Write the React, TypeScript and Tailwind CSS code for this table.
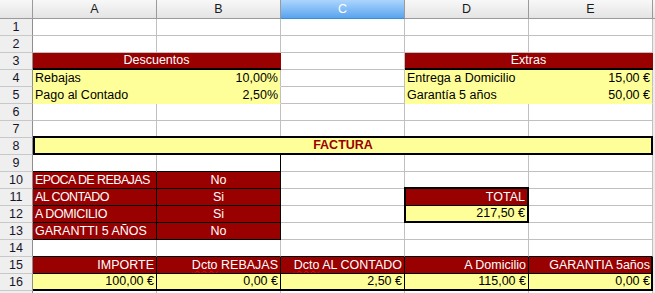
import React from 'react';

type CellProps = { className?: string; children?: React.ReactNode };

// One spreadsheet cell; every cell draws its own right and bottom grid line.
function C({ className = '', children }: CellProps) {
  return <div className={'overflow-hidden whitespace-nowrap ' + className}>{children}</div>;
}

const GRID = 'border-r border-b border-[#c0c0c0] bg-white';
const RED = 'bg-[#990000] text-white';
const YEL = 'bg-[#ffff99] text-black';
const HEAD = 'bg-linear-to-b from-[#f8f8f8] to-[#e4e4e4] border-r border-b border-[#9a9a9a] text-center text-[#1a1a1a] leading-[18px]';

function RowHead({ n }: { n?: number }) {
  return (
    <C className="bg-[#efefef] border-r border-r-[#8e8e8e] border-b border-b-[#c8c8c8] text-center text-[#15152a]">
      {n}
    </C>
  );
}

function Filler() {
  return <div className="bg-[#ececec]" />;
}

function EmptyRow({ n }: { n?: number }) {
  return (
    <>
      <RowHead n={n} />
      <C className={GRID} />
      <C className={GRID} />
      <C className={GRID} />
      <C className={GRID} />
      <C className={GRID} />
      <Filler />
    </>
  );
}

// Header word flagged by the spell checker (red wavy underline).
function Dcto({ rest }: { rest: string }) {
  return (
    <>
      <span className="underline decoration-wavy decoration-[#ff0000] decoration-1 underline-offset-[1px]">Dcto</span>
      {' ' + rest}
    </>
  );
}

export default function App() {
  return (
    <div className="w-[655px] h-[293px] overflow-hidden bg-white font-['Liberation_Sans',Arial,sans-serif] text-[12.5px] leading-[16px]">
      <div className="grid grid-cols-[33px_repeat(5,124px)_2px] grid-rows-[19px_repeat(17,17px)]">
        {/* column headers */}
        <C className="bg-linear-to-b from-[#f8f8f8] to-[#e4e4e4] border-r border-b border-[#9a9a9a]" />
        <C className={HEAD}>A</C>
        <C className={HEAD}>B</C>
        <C className="bg-linear-to-b from-[#acd5fc] to-[#58a4ee] border-r border-r-[#9a9a9a] border-b border-b-[#3d8bdb] text-center text-white leading-[18px]">
          C
        </C>
        <C className={HEAD}>D</C>
        <C className={HEAD}>E</C>
        <div className="bg-linear-to-b from-[#f8f8f8] to-[#e4e4e4] border-b border-[#9a9a9a]" />

        <EmptyRow n={1} />
        <EmptyRow n={2} />

        {/* row 3: section titles */}
        <RowHead n={3} />
        <C className={RED + ' col-span-2 text-center border-r border-r-[#990000] border-b-2 border-b-black leading-[15px]'}>
          Descuentos
        </C>
        <C className={GRID} />
        <C className={RED + ' col-span-2 text-center border-r border-r-[#990000] border-b-2 border-b-black leading-[15px]'}>
          Extras
        </C>
        <Filler />

        {/* row 4 */}
        <RowHead n={4} />
        <C className={YEL + ' pl-[2px] border-r border-b border-[#ffff99]'}>Rebajas</C>
        <C className={YEL + ' text-right pr-[2px] border-r border-r-[#c0c0c0] border-b border-b-[#ffff99]'}>10,00%</C>
        <C className={GRID} />
        <C className={YEL + ' pl-[2px] border-r border-b border-[#ffff99]'}>Entrega a Domicilio</C>
        <C className={YEL + ' text-right pr-[2px] border-r border-r-[#c0c0c0] border-b border-b-[#ffff99]'}>15,00 €</C>
        <Filler />

        {/* row 5 */}
        <RowHead n={5} />
        <C className={YEL + ' pl-[2px] border-r border-b border-[#ffff99]'}>Pago al Contado</C>
        <C className={YEL + ' text-right pr-[2px] border-r border-r-[#c0c0c0] border-b border-b-[#ffff99]'}>2,50%</C>
        <C className={GRID} />
        <C className={YEL + ' pl-[2px] border-r border-b border-[#ffff99]'}>Garantía 5 años</C>
        <C className={YEL + ' text-right pr-[2px] border-r border-r-[#c0c0c0] border-b border-b-[#ffff99]'}>50,00 €</C>
        <Filler />

        <EmptyRow n={6} />
        <EmptyRow n={7} />

        {/* row 8: invoice banner */}
        <RowHead n={8} />
        <C className="bg-[#ffff99] text-[#990000] col-span-5 -mt-[2px] border-2 border-black text-center font-bold leading-[15px]">
          FACTURA
        </C>
        <Filler />

        {/* row 9 */}
        <RowHead n={9} />
        <C className="bg-white border-r border-r-[#c0c0c0] border-b border-b-black" />
        <C className="bg-white border-r border-r-black border-b border-b-black" />
        <C className={GRID} />
        <C className={GRID} />
        <C className={GRID} />
        <Filler />

        {/* rows 10-13: options */}
        <RowHead n={10} />
        <C className={RED + ' pl-[2px] tracking-[-0.6px] border-r border-b border-black'}>EPOCA DE REBAJAS</C>
        <C className={RED + ' text-center border-r border-b border-black'}>No</C>
        <C className={GRID} />
        <C className={GRID} />
        <C className={GRID} />
        <Filler />

        <RowHead n={11} />
        <C className={RED + ' pl-[2px] tracking-[-0.6px] border-r border-b border-black'}>AL CONTADO</C>
        <C className={RED + ' text-center border-r border-b border-black'}>Si</C>
        <C className={GRID} />
        <C className={RED + ' -ml-px -mt-[2px] border-t-2 border-l-2 border-r-2 border-b border-black text-right pr-[2px]'}>
          TOTAL
        </C>
        <C className={GRID} />
        <Filler />

        <RowHead n={12} />
        <C className={RED + ' pl-[2px] tracking-[-0.4px] border-r border-b border-black'}>A DOMICILIO</C>
        <C className={RED + ' text-center border-r border-b border-black'}>Si</C>
        <C className={GRID} />
        <C className={YEL + ' -ml-px border-l-2 border-r-2 border-b-2 border-black text-right pr-[2px] leading-[15px]'}>
          217,50 €
        </C>
        <C className={GRID} />
        <Filler />

        <RowHead n={13} />
        <C className={RED + ' pl-[2px] border-r border-b border-black'}>GARANTTI 5 AÑOS</C>
        <C className={RED + ' text-center border-r border-b border-black'}>No</C>
        <C className={GRID} />
        <C className={GRID} />
        <C className={GRID} />
        <Filler />

        {/* row 14 */}
        <RowHead n={14} />
        <C className="bg-white border-r border-r-[#c0c0c0] border-b border-b-black" />
        <C className="bg-white border-r border-r-[#c0c0c0] border-b border-b-black" />
        <C className="bg-white border-r border-r-[#c0c0c0] border-b border-b-black" />
        <C className="bg-white border-r border-r-[#c0c0c0] border-b border-b-black" />
        <C className="bg-white border-r border-r-[#c0c0c0] border-b border-b-black" />
        <Filler />

        {/* rows 15-16: breakdown */}
        <RowHead n={15} />
        <C className={RED + ' text-right pr-[2px] border-r border-b border-black'}>IMPORTE</C>
        <C className={RED + ' text-right pr-[2px] border-r border-b border-black'}>
          <Dcto rest="REBAJAS" />
        </C>
        <C className={RED + ' text-right pr-[2px] border-r border-b border-black'}>
          <Dcto rest="AL CONTADO" />
        </C>
        <C className={RED + ' text-right pr-[2px] border-r border-b border-black'}>A Domicilio</C>
        <C className={RED + ' text-right pr-px border-r-2 border-b border-black'}>GARANTIA 5años</C>
        <Filler />

        <RowHead n={16} />
        <C className={YEL + ' text-right pr-[2px] border-r border-b-2 border-black leading-[15px]'}>100,00 €</C>
        <C className={YEL + ' text-right pr-[2px] border-r border-b-2 border-black leading-[15px]'}>0,00 €</C>
        <C className={YEL + ' text-right pr-[2px] border-r border-b-2 border-black leading-[15px]'}>2,50 €</C>
        <C className={YEL + ' text-right pr-[2px] border-r border-b-2 border-black leading-[15px]'}>115,00 €</C>
        <C className={YEL + ' text-right pr-px border-r-2 border-b-2 border-black leading-[15px]'}>0,00 €</C>
        <Filler />

        {/* row 17 only shows its top edge */}
        <EmptyRow />
      </div>
    </div>
  );
}
